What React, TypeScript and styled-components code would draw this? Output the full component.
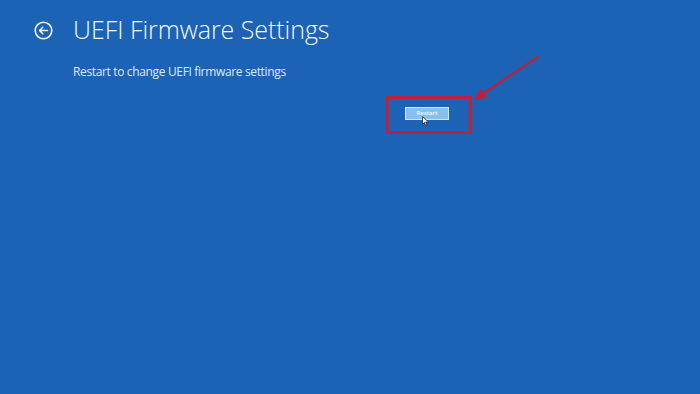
import styled, { createGlobalStyle } from 'styled-components';

const GlobalStyle = createGlobalStyle`
  html, body {
    margin: 0;
    padding: 0;
    background: #1c63b5;
  }
`;

const Screen = styled.div`
  position: relative;
  width: 700px;
  height: 394px;
  overflow: hidden;
  background: #1c63b5;
  font-family: "Open Sans", "Noto Sans", sans-serif;
  color: #ffffff;
  box-sizing: border-box;
  padding: 12px 0 0 34px;
`;

const Header = styled.div`
  display: flex;
  align-items: center;
  gap: 20px;
`;

const BackButton = styled.div`
  width: 19px;
  height: 19px;
  display: flex;
  align-items: center;
  justify-content: center;
  margin-top: 2px;
`;

const Title = styled.h1`
  margin: 0;
  font-size: 25px;
  font-weight: 300;
  line-height: 34px;
  letter-spacing: -0.05px;
  color: #f4f8fd;
`;

const Body = styled.div`
  display: flex;
  flex-direction: column;
  padding-left: 39px;
  padding-top: 18px;
`;

const Description = styled.p`
  margin: 0;
  font-size: 12px;
  font-weight: 400;
  line-height: 16px;
  letter-spacing: -0.35px;
  color: #dce8f6;
`;

const Actions = styled.div`
  display: flex;
  padding-left: 332px;
  padding-top: 27px;
`;

const RestartButton = styled.button`
  position: relative;
  width: 44px;
  height: 13px;
  padding: 0;
  border: 1px solid #d2e8fa;
  background: #88bfee;
  color: #eef6fe;
  font-family: "Open Sans", sans-serif;
  font-size: 6px;
  font-weight: 600;
  line-height: 11px;
  cursor: pointer;
`;

const Cursor = styled.svg`
  position: absolute;
  left: 16px;
  top: 8px;
`;

const Highlight = styled.div`
  position: absolute;
  left: 386px;
  top: 96px;
  width: 80px;
  height: 32px;
  border: 3px solid #c1203c;
`;

const Arrow = styled.svg`
  position: absolute;
  left: 0;
  top: 0;
  pointer-events: none;
`;

export default function App() {
  return (
    <Screen>
      <GlobalStyle />
      <Header>
        <BackButton>
          <svg width="19" height="19" viewBox="0 0 19 19">
            <circle cx="9.5" cy="9.5" r="8.3" fill="none" stroke="#f4f8fd" strokeWidth="1.6" />
            <path d="M13.5 9.5H5.8M8.8 6.3L5.6 9.5l3.2 3.2" fill="none" stroke="#f4f8fd" strokeWidth="1.6" strokeLinecap="round" strokeLinejoin="round" />
          </svg>
        </BackButton>
        <Title>UEFI Firmware Settings</Title>
      </Header>
      <Body>
        <Description>Restart to change UEFI firmware settings</Description>
        <Actions>
          <RestartButton>
            Restart
            <Cursor width="7" height="10" viewBox="0 0 7 10">
              <path d="M0.5 0.5v8l2-2 1.3 3 1.2-.5-1.3-3h2.8z" fill="#ffffff" stroke="#1a1a1a" strokeWidth="0.7" />
            </Cursor>
          </RestartButton>
        </Actions>
      </Body>
      <Highlight />
      <Arrow width="700" height="394" viewBox="0 0 700 394">
        <line x1="538" y1="57" x2="484" y2="93" stroke="#c1203c" strokeWidth="2.2" strokeLinecap="round" />
        <path d="M474 100L481 88.5L488 97.5Z" fill="#c1203c" />
      </Arrow>
    </Screen>
  );
}
